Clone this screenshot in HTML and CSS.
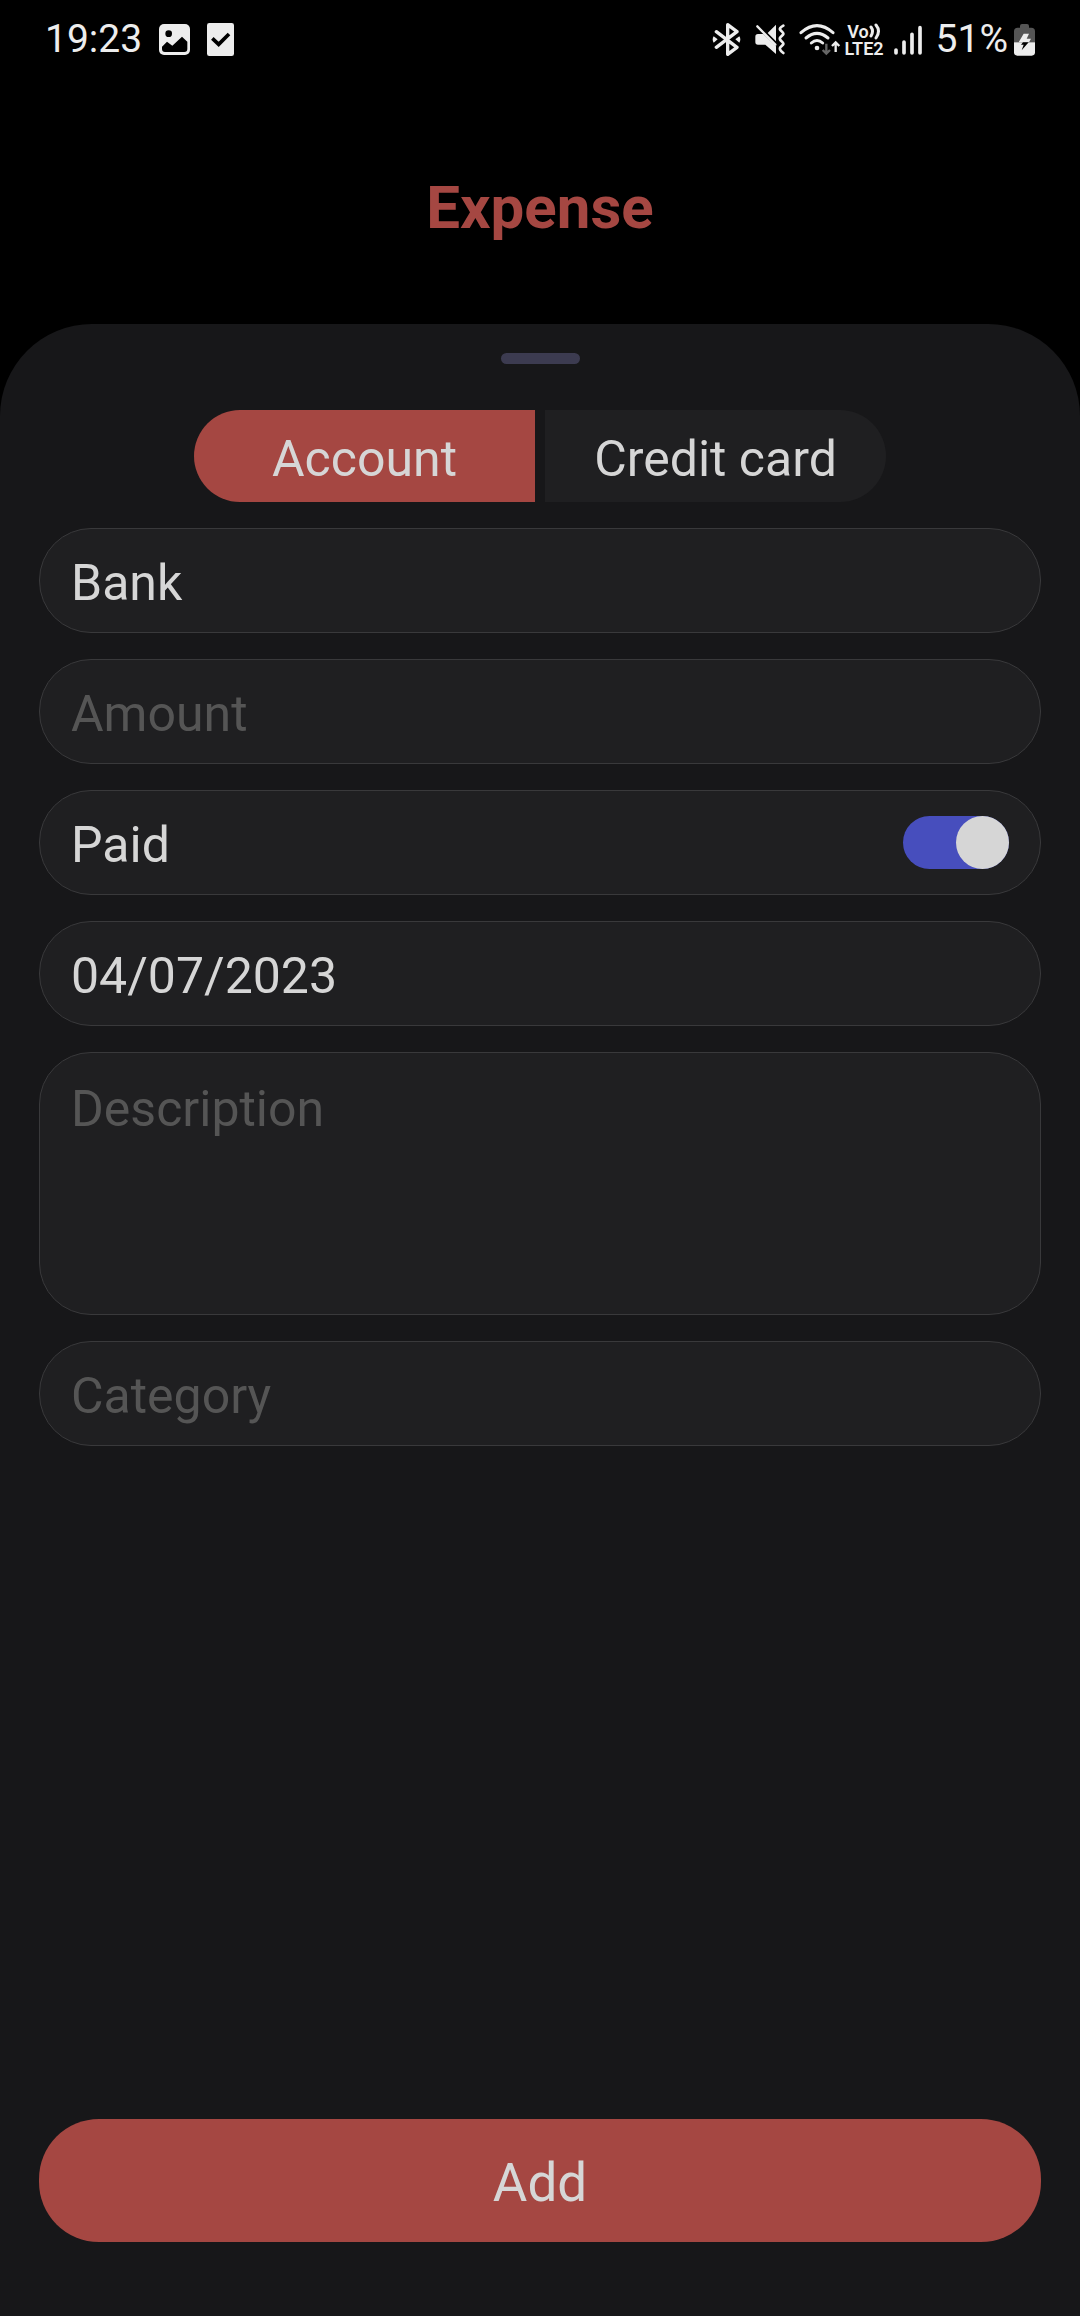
FILE: index.html
```html
<!DOCTYPE html>
<html lang="en">
<head>
<meta charset="utf-8">
<meta name="viewport" content="width=device-width, initial-scale=1">
<title>Expense</title>
<link rel="stylesheet" href="styles.css">
</head>
<body>
<div class="status">
  <div class="status-left">
    <span>19:23</span>
    <svg width="31" height="31" viewBox="384 42 93 93" aria-hidden="true">
      <rect x="384" y="42" width="93" height="93" rx="15" fill="#ededed"/>
      <circle cx="413" cy="71" r="10" fill="#000"/>
      <path d="M393 110L408 95L424 107L453 80L469 95V117Q469 126 460 126H402Q393 126 393 117Z" fill="#000"/>
    </svg>
    <svg width="27" height="33" viewBox="531 39 81 99" aria-hidden="true">
      <rect x="531" y="39" width="81" height="99" rx="7" fill="#ededed"/>
      <path d="M547 85L566 103L597 72" fill="none" stroke="#000" stroke-width="11"/>
    </svg>
  </div>
  <div class="status-right">
    <svg width="29" height="33" viewBox="33 39 87 99" aria-hidden="true">
      <path d="M46 65L108 112L80 133V44L108 65L46 112" fill="none" stroke="#ededed" stroke-width="10" stroke-linecap="round" stroke-linejoin="round"/>
      <path d="M38 79L50 88L38 98Q32 88 38 79ZM115 79L103 88L115 98Q121 88 115 79Z" fill="#ededed"/>
    </svg>
    <svg width="30" height="31" viewBox="165 42 90 93" aria-hidden="true">
      <path d="M174 72H190L228 109V132L196 104H174Q166 104 166 96V80Q166 72 174 72ZM228 44V94L203 69Z" fill="#ededed"/>
      <path d="M172 49L226 104" stroke="#ededed" stroke-width="7" stroke-linecap="round"/>
      <path d="M250 47Q236 55 241 60L248 67Q252 71 248 75L241 82Q238 86 241 90L248 97Q252 101 248 105L241 112Q236 119 250 129" fill="none" stroke="#ededed" stroke-width="8" stroke-linecap="round"/>
    </svg>
    <svg class="wifi" width="42" height="33" viewBox="294 39 126 99" aria-hidden="true">
      <g fill="none" stroke="#ededed" stroke-width="9" stroke-linecap="round">
        <path d="M300 68Q348 26 396 68"/>
        <path d="M315 84Q348 56 381 84"/>
        <path d="M331 99Q348 84 365 99"/>
      </g>
      <circle cx="348" cy="114" r="7" fill="#ededed"/>
      <path d="M376 101V131M365 120L376 131L387 120" fill="none" stroke="#666" stroke-width="7"/>
      <path d="M404 126V97M393 108L404 97L415 108" fill="none" stroke="#ededed" stroke-width="7"/>
    </svg>
    <span class="volte">
      <span class="volte-top">Vo<svg width="12" height="17" viewBox="0 0 12 17" aria-hidden="true"><path d="M2 4Q5 8 2 13M7 2Q12 8 7 15" fill="none" stroke="#ededed" stroke-width="3" stroke-linecap="round"/></svg></span>
      <span>LTE2</span>
    </span>
    <svg class="signal" width="28" height="30" viewBox="69 42 84 90" aria-hidden="true">
      <path d="M75 117V126M99 93V126M123 70V126M147 50V126" stroke="#ededed" stroke-width="11" stroke-linecap="round"/>
    </svg>
    <span class="percent">51%</span>
    <svg width="21" height="32" viewBox="432 42 63 96" aria-hidden="true">
      <path d="M450 53V48Q450 42 456 42H471Q477 42 477 48V53H484Q495 53 495 64V97H432V64Q432 53 443 53Z" fill="#555"/>
      <path d="M432 97H495V127Q495 137 485 137H442Q432 137 432 127Z" fill="#ededed"/>
      <path d="M461 71H477L470 86H483L477 97H446Z" fill="#ededed"/>
      <path d="M459 97H476L455 121L461 104H453Z" fill="#000"/>
    </svg>
  </div>
</div>
<header class="header"><h1 class="title">Expense</h1></header>
<main class="sheet">
  <div class="handle"></div>
  <form class="form">
    <div class="tabs">
      <button type="button" class="tab tab-active" aria-pressed="true">Account</button>
      <button type="button" class="tab" aria-pressed="false">Credit card</button>
    </div>
    <select class="field" aria-label="Bank"><option>Bank</option></select>
    <input class="field" type="text" inputmode="decimal" placeholder="Amount" aria-label="Amount">
    <div class="field field-switch">
      <label for="paid">Paid</label>
      <input class="switch" id="paid" type="checkbox" role="switch" checked>
    </div>
    <input class="field" type="text" value="04/07/2023" aria-label="Date">
    <textarea class="field field-area" placeholder="Description" aria-label="Description"></textarea>
    <select class="field field-empty" aria-label="Category"><option>Category</option></select>
    <button type="submit" class="submit">Add</button>
  </form>
</main>
</body>
</html>
```

FILE: styles.css
```css
* {
  box-sizing: border-box;
}

body {
  margin: 0;
  min-height: 100vh;
  display: flex;
  flex-direction: column;
  background: #000;
  color: #d6d6d6;
  font-family: Roboto, "Liberation Sans", sans-serif;
}

button,
input,
select,
textarea {
  margin: 0;
  border: 0;
  font: inherit;
  color: inherit;
  outline: none;
}

.status {
  display: flex;
  justify-content: space-between;
  padding: 16px 45px;
  color: #ededed;
  font-size: 39px;
  line-height: 47px;
}

.status-left,
.status-right {
  display: flex;
  align-items: center;
}

.status-left {
  gap: 17px;
}

.status-right {
  gap: 14px;
}

.status-right .wifi {
  margin-right: -11px;
}

.volte {
  display: flex;
  flex-direction: column;
  align-items: center;
  margin-right: -4px;
  font-size: 18px;
  font-weight: 600;
  line-height: 17px;
}

.volte-top {
  display: flex;
}

.percent {
  margin-right: -8px;
}

.header {
  padding: 94px 39px 81px;
}

.title {
  margin: 0;
  color: #a54742;
  font-size: 60px;
  font-weight: 700;
  line-height: 70px;
  text-align: center;
}

.sheet {
  flex: 1;
  display: flex;
  flex-direction: column;
  padding: 29px 39px 74px;
  border-radius: 92px 92px 0 0;
  background: #171719;
}

.handle {
  width: 79px;
  height: 11px;
  margin: 0 auto 46px;
  border-radius: 6px;
  background: #3c3b50;
}

.form {
  flex: 1;
  display: flex;
  flex-direction: column;
  gap: 26px;
  font-size: 50px;
  line-height: 58px;
}

.tabs {
  display: flex;
  justify-content: center;
  gap: 10px;
}

.tab {
  width: 341px;
  padding: 20px 0 14px;
  border-radius: 0 46px 46px 0;
  background: #1f1f21;
}

.tab-active {
  border-radius: 46px 0 0 46px;
  background: #a54742;
}

.field {
  appearance: none;
  width: 100%;
  min-height: 105px;
  padding: 25px 31px 20px;
  border: 1px solid #39393b;
  border-radius: 52px;
  background: #1f1f21;
}

.field::placeholder {
  color: #555;
  opacity: 1;
}

.field-empty {
  color: #555;
}

.field-switch {
  display: flex;
  align-items: center;
  justify-content: space-between;
  padding-top: 0;
  padding-bottom: 0;
}

.field-switch label {
  padding-top: 5px;
}

.switch {
  appearance: none;
  display: flex;
  width: 106px;
  height: 53px;
  border-radius: 27px;
  background: #474ebd;
}

.switch::before {
  content: "";
  width: 53px;
  height: 53px;
  border-radius: 50%;
  background: #d6d6d6;
}

.switch:checked {
  justify-content: flex-end;
}

.field-area {
  display: block;
  height: 263px;
  padding-top: 27px;
  resize: none;
}

.submit {
  margin-top: auto;
  padding: 33px 0 28px;
  border-radius: 60px;
  background: #a54742;
  font-size: 53px;
  line-height: 62px;
}
```
